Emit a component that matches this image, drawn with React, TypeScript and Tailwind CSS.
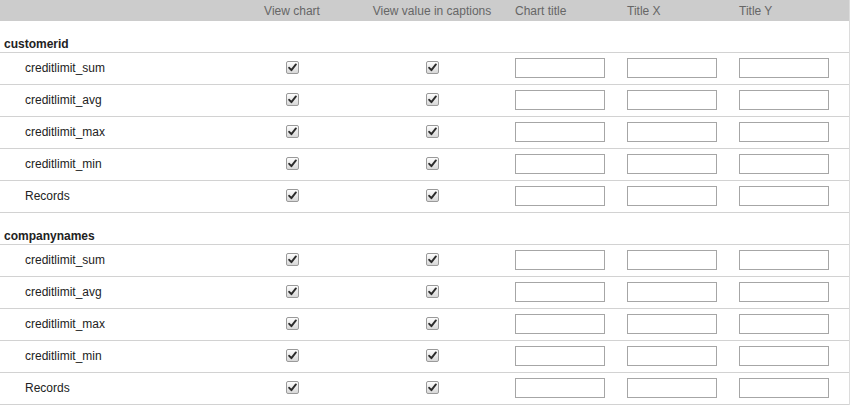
import React from "react";

type Group = { name: string; fields: string[] };

const groups: Group[] = [
  {
    name: "customerid",
    fields: ["creditlimit_sum", "creditlimit_avg", "creditlimit_max", "creditlimit_min", "Records"],
  },
  {
    name: "companynames",
    fields: ["creditlimit_sum", "creditlimit_avg", "creditlimit_max", "creditlimit_min", "Records"],
  },
];

const cols = "grid grid-cols-[235px_114px_166px_112px_112px_111px]";

function Check() {
  return (
    <span className="inline-flex h-[13px] w-[13px] items-center justify-center rounded-[2px] border border-[#9a9a9a] bg-gradient-to-b from-[#fdfdfd] to-[#d8d8d8]">
      <svg width="9" height="9" viewBox="0 0 9 9" aria-hidden>
        <path d="M1.2 4.8 L3.4 7.2 L7.9 1.4" fill="none" stroke="#2b2b2b" strokeWidth="1.9" strokeLinecap="round" strokeLinejoin="round" />
      </svg>
    </span>
  );
}

function Field() {
  return <input type="text" className="h-[20px] w-[90px] border border-[#a6a6a6] bg-white outline-none" />;
}

export default function App() {
  return (
    <div className="w-[850px] border-r border-[#dcdcdc] bg-white text-[12px] leading-[14px] text-[#222]" style={{ fontFamily: '"Liberation Sans", Arial, sans-serif' }}>
      <div className={`${cols} h-[21px] items-center bg-[#cccccc] text-[#666]`}>
        <div />
        <div className="text-center">View chart</div>
        <div className="text-center">View value in captions</div>
        <div>Chart title</div>
        <div>Title X</div>
        <div>Title Y</div>
      </div>
      {groups.map((g) => (
        <div key={g.name}>
          <div className="flex h-[32px] items-end border-b border-[#d2d2d2] pb-[1px] pl-[4px] font-bold">
            {g.name}
          </div>
          {g.fields.map((f) => (
            <div key={f} className={`${cols} h-[32px] items-center border-b border-[#d2d2d2] pb-[2px]`}>
              <div className="pl-[25px]">{f}</div>
              <div className="flex justify-center">
                <Check />
              </div>
              <div className="flex justify-center">
                <Check />
              </div>
              <div>
                <Field />
              </div>
              <div>
                <Field />
              </div>
              <div>
                <Field />
              </div>
            </div>
          ))}
        </div>
      ))}
    </div>
  );
}
